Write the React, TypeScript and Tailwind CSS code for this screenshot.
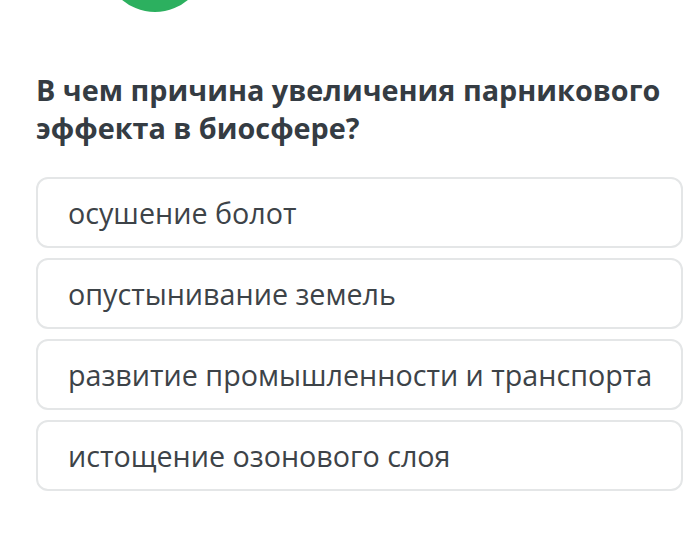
import React from 'react';

const options = [
  'осушение болот',
  'опустынивание земель',
  'развитие промышленности и транспорта',
  'истощение озонового слоя',
];

const App: React.FC = () => {
  return (
    <div className="w-[690px] h-[551px] overflow-hidden bg-white" style={{ fontFamily: '"Open Sans", "Noto Sans", sans-serif' }}>
      <div className="ml-[104px] mt-[-90px] w-[102px] h-[102px] rounded-full bg-[#2cb05f]" />
      <div className="px-[36px] pt-[59px]">
        <h1 className="text-[28.8px] leading-[38px] font-bold text-[#353c43] whitespace-nowrap">
          В чем причина увеличения парникового
          <br />
          эффекта в биосфере?
        </h1>
        <div className="mt-[30px] flex flex-col gap-[10px] w-[647px]">
          {options.map(opt => (
            <div
              key={opt}
              className="h-[71px] flex items-center pl-[30px] rounded-[12px] border-2 border-[#e4e6e7] text-[28.7px] text-[#3d4348] whitespace-nowrap"
            >
              {opt}
            </div>
          ))}
        </div>
      </div>
    </div>
  );
};

export default App;
